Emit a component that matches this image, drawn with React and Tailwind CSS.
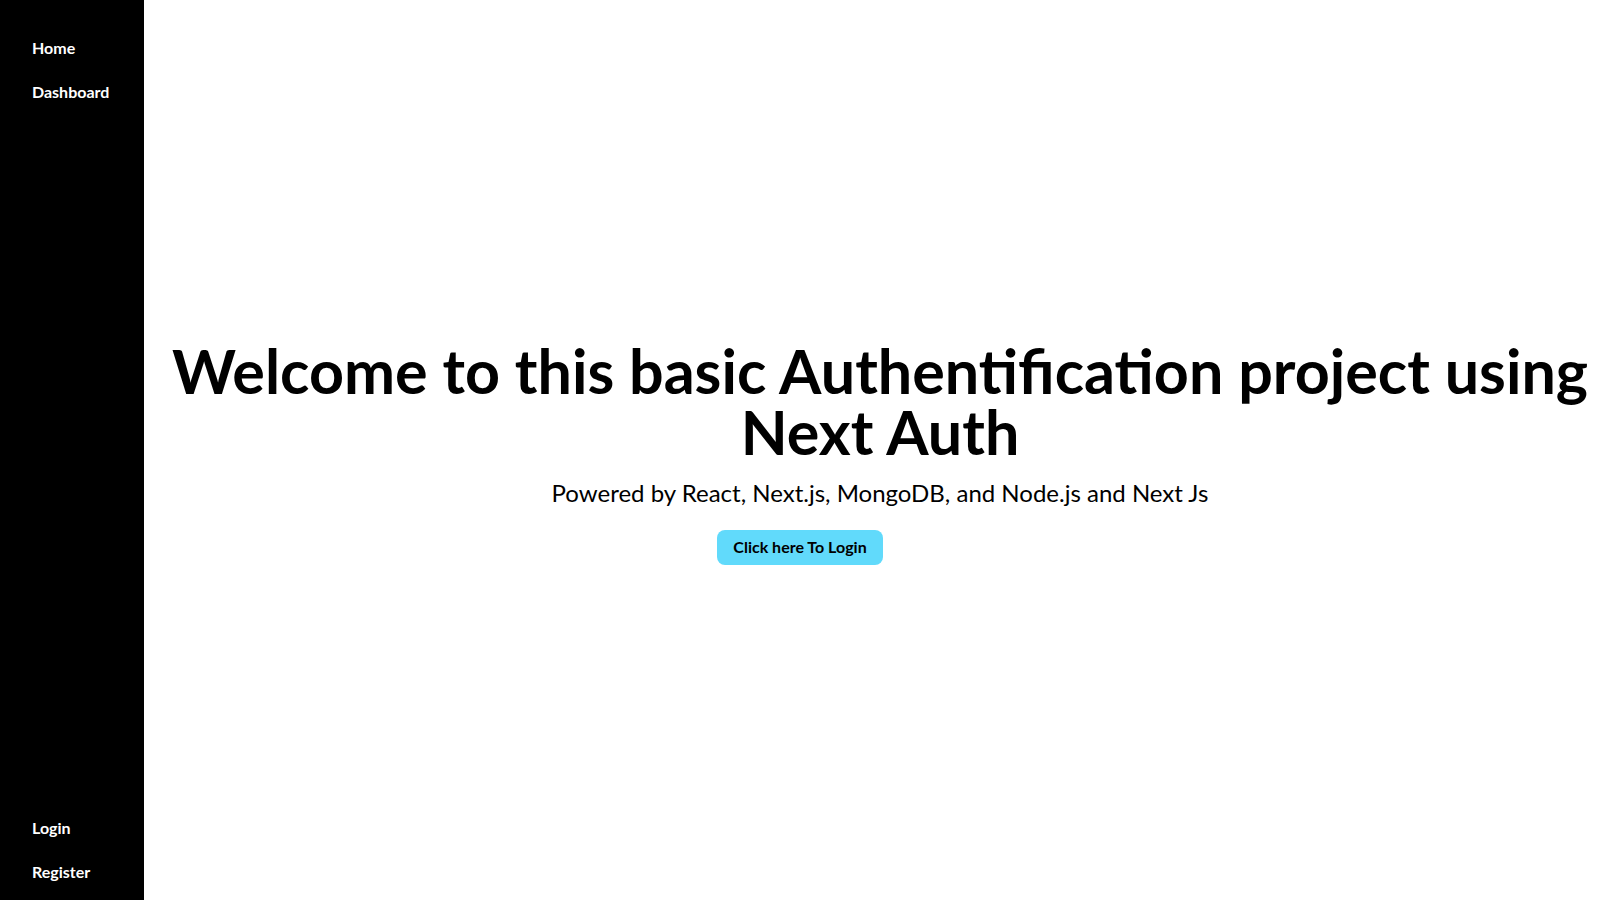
import React from 'react';

const Sidebar = () => {
  return (
    <aside className="w-36 shrink-0 bg-black text-white flex flex-col justify-between pt-9 pb-4 px-8">
      <nav className="flex flex-col gap-5">
        <a className="font-bold leading-6">Home</a>
        <a className="font-bold leading-6">Dashboard</a>
      </nav>
      <nav className="flex flex-col gap-5">
        <a className="font-bold leading-6">Login</a>
        <a className="font-bold leading-6">Register</a>
      </nav>
    </aside>
  );
};

export default function App() {
  return (
    <div className="flex h-screen bg-white font-['Lato',sans-serif]">
      <Sidebar />
      <main className="flex-1 flex flex-col items-center justify-center pl-4 pt-1 text-black">
        <h1 className="text-[61px] font-bold leading-none text-center">
          Welcome to this basic Authentification project using Next Auth
        </h1>
        <p className="text-2xl mt-[15px] text-center">
          Powered by React, Next.js, MongoDB, and Node.js and Next Js
        </p>
        <button className="mt-[21px] mr-40 h-[35px] px-4 rounded-lg bg-[#61dafb] font-bold text-black">
          Click here To Login
        </button>
      </main>
    </div>
  );
}
